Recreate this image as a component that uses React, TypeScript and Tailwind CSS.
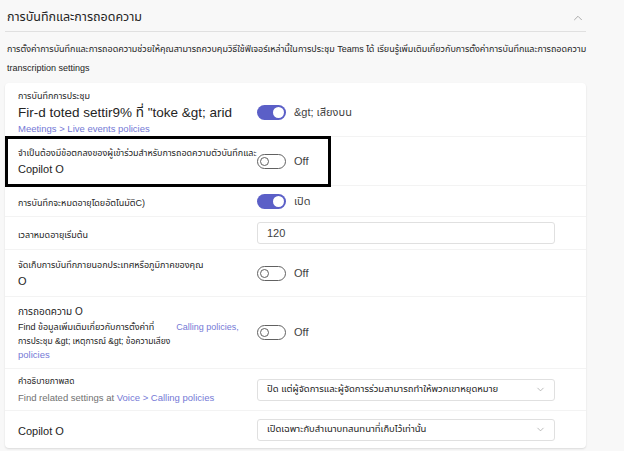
import { ChevronUp, ChevronDown } from "lucide-react";

// ─── Bits ─────────────────────────────────────────────────────────────────────

function Toggle({ on, label }: { on: boolean; label: string }) {
  return (
    <div className="flex items-center gap-[8px]">
      {on ? (
        <div className="flex h-[15px] w-[29px] items-center justify-end rounded-full bg-[#5b5fc7] pr-[2px]">
          <div className="h-[11px] w-[11px] rounded-full bg-white" />
        </div>
      ) : (
        <div className="flex h-[15px] w-[29px] items-center rounded-full border border-[#616161] bg-white pl-[2px]">
          <div className="h-[9px] w-[9px] rounded-full border border-[#616161]" />
        </div>
      )}
      <span className="text-[11px] text-[#424242]">{label}</span>
    </div>
  );
}

function Select({ value }: { value: string }) {
  return (
    <div className="flex h-[22px] w-[298px] items-center justify-between rounded-[3px] border border-[#e0e0e0] bg-white pl-[9px] pr-[8px]">
      <span className="text-[9.5px] text-[#242424]">{value}</span>
      <ChevronDown className="h-[11px] w-[11px] text-[#9e9e9e]" strokeWidth={1.5} />
    </div>
  );
}

function Row({
  h,
  left,
  right,
  last,
}: {
  h: string;
  left: React.ReactNode;
  right: React.ReactNode;
  last?: boolean;
}) {
  return (
    <div className={`flex items-center ${h} ${last ? "" : "border-b border-[#f3f3f3]"}`}>
      <div className="w-[252px] shrink-0 pl-[13px] pr-[6px]">{left}</div>
      <div className="flex-1">{right}</div>
    </div>
  );
}

const link = "text-[#7579d6]";

// ─── Page ─────────────────────────────────────────────────────────────────────

export default function App() {
  return (
    <div
      className="relative h-[451px] w-[624px] overflow-hidden bg-[#f8f8f8] text-[#242424]"
      style={{ fontFamily: "'Segoe UI', 'Liberation Sans', 'Noto Sans Thai', sans-serif" }}
    >
      {/* Header */}
      <div className="ml-[5px] flex h-[32px] w-[581px] items-center justify-between border-b border-[#e0e0e0] pl-[2px] pr-[1px] pt-[4px]">
        <span className="text-[12.5px]">การบันทึกและการถอดความ</span>
        <ChevronUp className="h-[14px] w-[14px] text-[#a0a0a0]" strokeWidth={1.5} />
      </div>

      {/* Description */}
      <p className="ml-[7px] mt-[8px] w-[580px] whitespace-nowrap text-[9px] leading-[19px]">
        การตั้งค่าการบันทึกและการถอดความช่วยให้คุณสามารถควบคุมวิธีใช้ฟีเจอร์เหล่านี้ในการประชุม Teams ได้ เรียนรู้เพิ่มเติมเกี่ยวกับการตั้งค่าการบันทึกและการถอดความ
        <br />
        transcription settings
      </p>

      {/* Card */}
      <div className="ml-[5px] mt-[5px] w-[581px] rounded-[4px] bg-white shadow-[0_1px_2px_rgba(0,0,0,0.12)]">
        <Row
          h="h-[54px] pt-[5px]"
          left={
            <div className="flex flex-col">
              <span className="text-[9px] leading-[13px]">การบันทึกการประชุม</span>
              <span className="whitespace-nowrap text-[13.5px] leading-[20px]">
                Fir-d toted settir9% ที่ "toke &amp;gt; arid
              </span>
              <span className={`text-[9.5px] leading-[12px] ${link}`}>Meetings &gt; Live events policies</span>
            </div>
          }
          right={<Toggle on label="&amp;gt; เสียงบน" />}
        />
        <Row
          h="h-[49px]"
          left={
            <div className="flex flex-col">
              <span className="whitespace-nowrap text-[9px] leading-[15px]">
                จำเป็นต้องมีข้อตกลงของผู้เข้าร่วมสำหรับการถอดความตัวบันทึกและ
              </span>
              <span className="text-[11px] leading-[16px]">Copilot O</span>
            </div>
          }
          right={<Toggle on={false} label="Off" />}
        />
        <Row
          h="h-[31px]"
          left={<span className="text-[9px]">การบันทึกจะหมดอายุโดยอัตโนมัติC)</span>}
          right={<Toggle on label="เปิด" />}
        />
        <Row
          h="h-[33px]"
          left={<span className="text-[9px]">เวลาหมดอายุเริ่มต้น</span>}
          right={
            <div className="flex h-[22px] w-[298px] items-center rounded-[3px] border border-[#e0e0e0] pl-[9px] text-[11px] text-[#424242]">
              120
            </div>
          }
        />
        <Row
          h="h-[47px]"
          left={
            <div className="flex flex-col">
              <span className="whitespace-nowrap text-[9px] leading-[15px]">
                จัดเก็บการบันทึกภายนอกประเทศหรือภูมิภาคของคุณ
              </span>
              <span className="text-[11px] leading-[16px]">O</span>
            </div>
          }
          right={<Toggle on={false} label="Off" />}
        />
        <Row
          h="h-[72px]"
          left={
            <div className="flex flex-col">
              <span className="text-[10px] leading-[17px]">การถอดความ O</span>
              <span className="whitespace-nowrap text-[9px] leading-[14px]">
                Find ข้อมูลเพิ่มเติมเกี่ยวกับการตั้งค่าที่
                <span className={`ml-[22px] ${link}`}>Calling policies,</span>
              </span>
              <span className="text-[8.5px] leading-[14px]">การประชุม &amp;gt; เหตุการณ์ &amp;gt; ข้อความเสียง</span>
              <span className={`text-[9.5px] leading-[14px] ${link}`}>policies</span>
            </div>
          }
          right={<Toggle on={false} label="Off" />}
        />
        <Row
          h="h-[42px]"
          left={
            <div className="flex flex-col">
              <span className="text-[8.5px] leading-[15px]">คำอธิบายภาพสด</span>
              <span className="whitespace-nowrap text-[9.5px] leading-[17px] text-[#707070]">
                Find related settings at <span className={link}>Voice &gt; Calling policies</span>
              </span>
            </div>
          }
          right={<Select value="ปิด แต่ผู้จัดการและผู้จัดการร่วมสามารถทำให้พวกเขาหยุดหมาย" />}
        />
        <Row
          h="h-[37px]"
          last
          left={<span className="text-[11px]">Copilot O</span>}
          right={<Select value="เปิดเฉพาะกับสำเนาบทสนทนาที่เก็บไว้เท่านั้น" />}
        />
      </div>

      {/* Highlight annotation */}
      <div className="absolute left-[5px] top-[136px] h-[51px] w-[326px] border-[3px] border-black" />
    </div>
  );
}
